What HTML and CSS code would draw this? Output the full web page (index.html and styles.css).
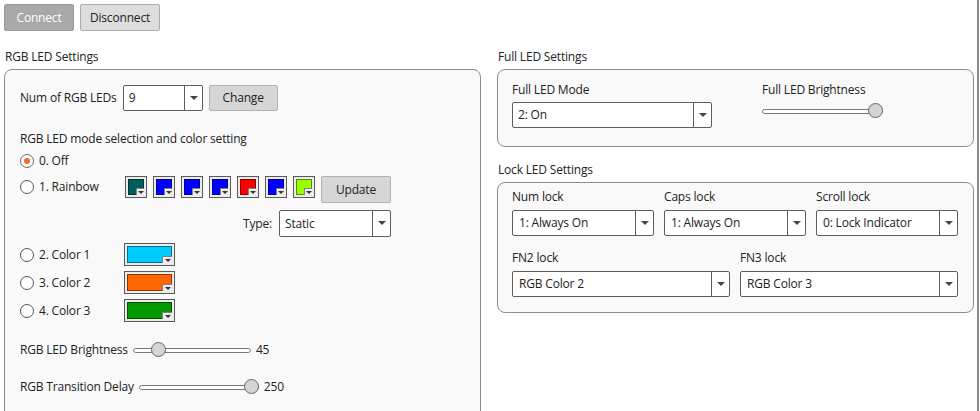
FILE: index.html
```html
<!DOCTYPE html>
<html>
<head>
<meta charset="utf-8">
<link rel="stylesheet" href="styles.css">
</head>
<body>
<div class="page">
  <div class="toolbar">
    <button class="btn btn-connect">Connect</button>
    <button class="btn btn-disconnect">Disconnect</button>
  </div>
  <div class="columns">
    <section class="col">
      <div class="sec-title">RGB LED Settings</div>
      <div class="panel panel-rgb">
        <div class="row-num">
          <span class="lbl">Num of RGB LEDs</span>
          <div class="select sel-num"><span class="sel-text">9</span><span class="sel-arrow"></span></div>
          <button class="btn btn-change">Change</button>
        </div>
        <div class="mode-title">RGB LED mode selection and color setting</div>
        <div class="radio-row r-off"><span class="radio checked"></span><span>0. Off</span></div>
        <div class="rainbow">
          <div class="radio-row r-rainbow"><span class="radio"></span><span>1. Rainbow</span></div>
          <div class="rainbow-right">
            <div class="swatch-row">
              <span class="swatch"><span class="sw-fill" style="background:#005f5c"></span></span>
              <span class="swatch"><span class="sw-fill" style="background:#0000ff"></span></span>
              <span class="swatch"><span class="sw-fill" style="background:#0000ff"></span></span>
              <span class="swatch"><span class="sw-fill" style="background:#0000ff"></span></span>
              <span class="swatch"><span class="sw-fill" style="background:#ff0000"></span></span>
              <span class="swatch"><span class="sw-fill" style="background:#0000ff"></span></span>
              <span class="swatch"><span class="sw-fill" style="background:#99ff00"></span></span>
              <button class="btn btn-update">Update</button>
            </div>
            <div class="type-row">
              <span class="lbl">Type:</span>
              <div class="select sel-type"><span class="sel-text">Static</span><span class="sel-arrow"></span></div>
            </div>
          </div>
        </div>
        <div class="color-rows">
          <div class="color-row">
            <div class="radio-row r-color"><span class="radio"></span><span>2. Color 1</span></div>
            <span class="swatch swatch-wide"><span class="sw-fill" style="background:#00ccff"></span></span>
          </div>
          <div class="color-row">
            <div class="radio-row r-color"><span class="radio"></span><span>3. Color 2</span></div>
            <span class="swatch swatch-wide"><span class="sw-fill" style="background:#ff6600"></span></span>
          </div>
          <div class="color-row">
            <div class="radio-row r-color"><span class="radio"></span><span>4. Color 3</span></div>
            <span class="swatch swatch-wide"><span class="sw-fill" style="background:#009900"></span></span>
          </div>
        </div>
        <div class="slider-row sr-bright">
          <span class="lbl">RGB LED Brightness</span>
          <div class="slider s-bright"><span class="track"></span><span class="thumb" style="left:18px"></span></div>
          <span class="val">45</span>
        </div>
        <div class="slider-row sr-delay">
          <span class="lbl">RGB Transition Delay</span>
          <div class="slider s-delay"><span class="track"></span><span class="thumb" style="left:105px"></span></div>
          <span class="val">250</span>
        </div>
      </div>
    </section>
    <section class="col">
      <div class="sec-title">Full LED Settings</div>
      <div class="panel panel-full">
        <div class="field f-mode">
          <div class="field-lbl">Full LED Mode</div>
          <div class="select"><span class="sel-text">2: On</span><span class="sel-arrow"></span></div>
        </div>
        <div class="field f-bright">
          <div class="field-lbl">Full LED Brightness</div>
          <div class="slider s-full"><span class="track"></span><span class="thumb" style="left:106px"></span></div>
        </div>
      </div>
      <div class="sec-title sec-lock">Lock LED Settings</div>
      <div class="panel panel-lock">
        <div class="lock-grid three">
          <div class="field">
            <div class="field-lbl">Num lock</div>
            <div class="select"><span class="sel-text">1: Always On</span><span class="sel-arrow"></span></div>
          </div>
          <div class="field">
            <div class="field-lbl">Caps lock</div>
            <div class="select"><span class="sel-text">1: Always On</span><span class="sel-arrow"></span></div>
          </div>
          <div class="field">
            <div class="field-lbl">Scroll lock</div>
            <div class="select"><span class="sel-text">0: Lock Indicator</span><span class="sel-arrow"></span></div>
          </div>
        </div>
        <div class="lock-grid two">
          <div class="field">
            <div class="field-lbl">FN2 lock</div>
            <div class="select"><span class="sel-text">RGB Color 2</span><span class="sel-arrow"></span></div>
          </div>
          <div class="field">
            <div class="field-lbl">FN3 lock</div>
            <div class="select"><span class="sel-text">RGB Color 3</span><span class="sel-arrow"></span></div>
          </div>
        </div>
      </div>
    </section>
  </div>
</div>
</body>
</html>
```

FILE: styles.css
```css
html, body {
  margin: 0;
  padding: 0;
  background: #ffffff;
}
body {
  width: 979px;
  height: 411px;
  box-sizing: border-box;
  border-right: 2px solid #8a8a8a;
  overflow: hidden;
  font-family: "Open Sans", "Noto Sans", sans-serif;
  font-size: 12px;
  letter-spacing: -0.18px;
  line-height: 16px;
  color: #222222;
}
.page {
  padding: 4px 0 0 4px;
}
.toolbar {
  display: flex;
  gap: 6px;
}
.btn {
  font-family: inherit;
  font-size: 12px;
  letter-spacing: -0.18px;
  line-height: 16px;
  height: 27px;
  padding: 0;
  border-radius: 2px;
  box-sizing: border-box;
  cursor: default;
}
.btn-connect {
  width: 70px;
  background: #a9a9a9;
  border: 1px solid #9a9a9a;
  color: #ffffff;
}
.btn-disconnect {
  width: 80px;
  background: #dddddd;
  border: 1px solid #acacac;
  color: #222222;
}
.columns {
  display: flex;
  gap: 16px;
  margin-top: 18px;
}
.col {
  width: 477px;
  display: flex;
  flex-direction: column;
}
.sec-title {
  height: 16px;
  padding-left: 1px;
  margin-bottom: 4px;
}
.sec-lock {
  margin-top: 15px;
}
.panel {
  border: 1px solid #8c8c8c;
  border-radius: 8px;
  background: #f9f9f9;
  box-sizing: border-box;
}
.panel-rgb {
  padding: 15px 15px 40px 15px;
}
.row-num {
  display: flex;
  align-items: center;
  height: 26px;
  gap: 6px;
}
.select {
  display: flex;
  height: 26px;
  box-sizing: border-box;
  border: 1px solid #5e5e5e;
  border-radius: 2px;
  background: #ffffff;
}
.sel-text {
  flex: 1;
  padding-left: 5px;
  line-height: 24px;
  white-space: nowrap;
  overflow: hidden;
}
.sel-arrow {
  width: 17px;
  border-left: 1px solid #5e5e5e;
  position: relative;
}
.sel-arrow::after {
  content: "";
  position: absolute;
  left: 5px;
  top: 10px;
  border-left: 4px solid transparent;
  border-right: 4px solid transparent;
  border-top: 4px solid #444444;
}
.sel-num {
  width: 80px;
}
.btn-change {
  width: 69px;
  height: 26px;
  background: #d6d6d6;
  border: 1px solid #b2b2b2;
  color: #222222;
}
.mode-title {
  margin-top: 20px;
  height: 16px;
}
.radio-row {
  display: flex;
  align-items: center;
  gap: 5px;
}
.radio {
  width: 14px;
  height: 14px;
  box-sizing: border-box;
  border: 1px solid #555555;
  border-radius: 50%;
  background: #ffffff;
  position: relative;
  flex: none;
}
.radio.checked {
  border-color: #6a6a6a;
}
.radio.checked::after {
  content: "";
  position: absolute;
  left: 3px;
  top: 3px;
  width: 6px;
  height: 6px;
  border-radius: 50%;
  background: #f26a35;
}
.r-off {
  margin-top: 4px;
  height: 20px;
}
.rainbow {
  display: flex;
  align-items: flex-start;
  margin-top: 5px;
}
.r-rainbow {
  width: 105px;
  height: 22px;
}
.swatch-row {
  display: flex;
  align-items: flex-start;
  gap: 6px;
}
.swatch {
  display: block;
  position: relative;
  width: 22px;
  height: 22px;
  box-sizing: border-box;
  border: 1px solid #5a5a5a;
  background: #ececec;
  padding: 2px;
  flex: none;
}
.sw-fill {
  display: block;
  width: 100%;
  height: 100%;
  box-sizing: border-box;
  border: 1px solid rgba(0, 0, 0, 0.45);
}
.swatch::before {
  content: "";
  position: absolute;
  right: 2px;
  bottom: 2px;
  width: 7px;
  height: 6px;
  background: #ececec;
  border-left: 1px solid rgba(0, 0, 0, 0.45);
  border-top: 1px solid rgba(0, 0, 0, 0.45);
}
.swatch::after {
  content: "";
  position: absolute;
  right: 2px;
  bottom: 3px;
  border-left: 3px solid transparent;
  border-right: 3px solid transparent;
  border-top: 3px solid #333333;
}
.swatch-wide {
  width: 51px;
  height: 23px;
}
.swatch-wide::before {
  width: 9px;
  height: 6px;
}
.swatch-wide::after {
  right: 3px;
}
.btn-update {
  width: 70px;
  background: #d6d6d6;
  border: 1px solid #b2b2b2;
  color: #222222;
}
.type-row {
  display: flex;
  justify-content: flex-end;
  align-items: center;
  gap: 7px;
  margin-top: 7px;
}
.sel-type {
  width: 112px;
  height: 27px;
}
.sel-type .sel-text {
  line-height: 25px;
}
.color-rows {
  display: flex;
  flex-direction: column;
  gap: 5px;
  margin-top: 6px;
}
.color-row {
  display: flex;
  align-items: center;
  height: 23px;
}
.r-color {
  width: 104px;
}
.slider-row {
  display: flex;
  align-items: center;
  height: 20px;
  gap: 5px;
}
.sr-bright {
  margin-top: 18px;
}
.sr-delay {
  margin-top: 17px;
}
.slider {
  position: relative;
  width: 118px;
  height: 16px;
  flex: none;
}
.track {
  position: absolute;
  left: 0;
  right: 0;
  top: 6px;
  height: 5px;
  box-sizing: border-box;
  border: 1px solid #777777;
  border-radius: 3px;
  background: #ffffff;
}
.thumb {
  position: absolute;
  top: 0;
  width: 15px;
  height: 15px;
  box-sizing: border-box;
  border: 1px solid #666666;
  border-radius: 50%;
  background: #d4d4d4;
}
.s-delay {
  width: 120px;
}
.panel-full {
  display: flex;
  gap: 50px;
  padding: 12px 15px 18px 14px;
}
.field {
  display: flex;
  flex-direction: column;
}
.field-lbl {
  height: 16px;
  margin-bottom: 4px;
}
.f-mode {
  width: 200px;
}
.f-bright .field-lbl {
  margin-bottom: 5px;
}
.s-full {
  width: 121px;
  height: 15px;
}
.panel-lock {
  padding: 6px 15px 15px 14px;
}
.panel-lock .field-lbl {
  margin-bottom: 5px;
}
.lock-grid {
  display: grid;
  gap: 10px;
}
.lock-grid.three {
  grid-template-columns: repeat(3, 1fr);
}
.lock-grid.two {
  grid-template-columns: repeat(2, 1fr);
  margin-top: 14px;
}
.panel-lock .sel-text {
  padding-left: 6px;
}
```
